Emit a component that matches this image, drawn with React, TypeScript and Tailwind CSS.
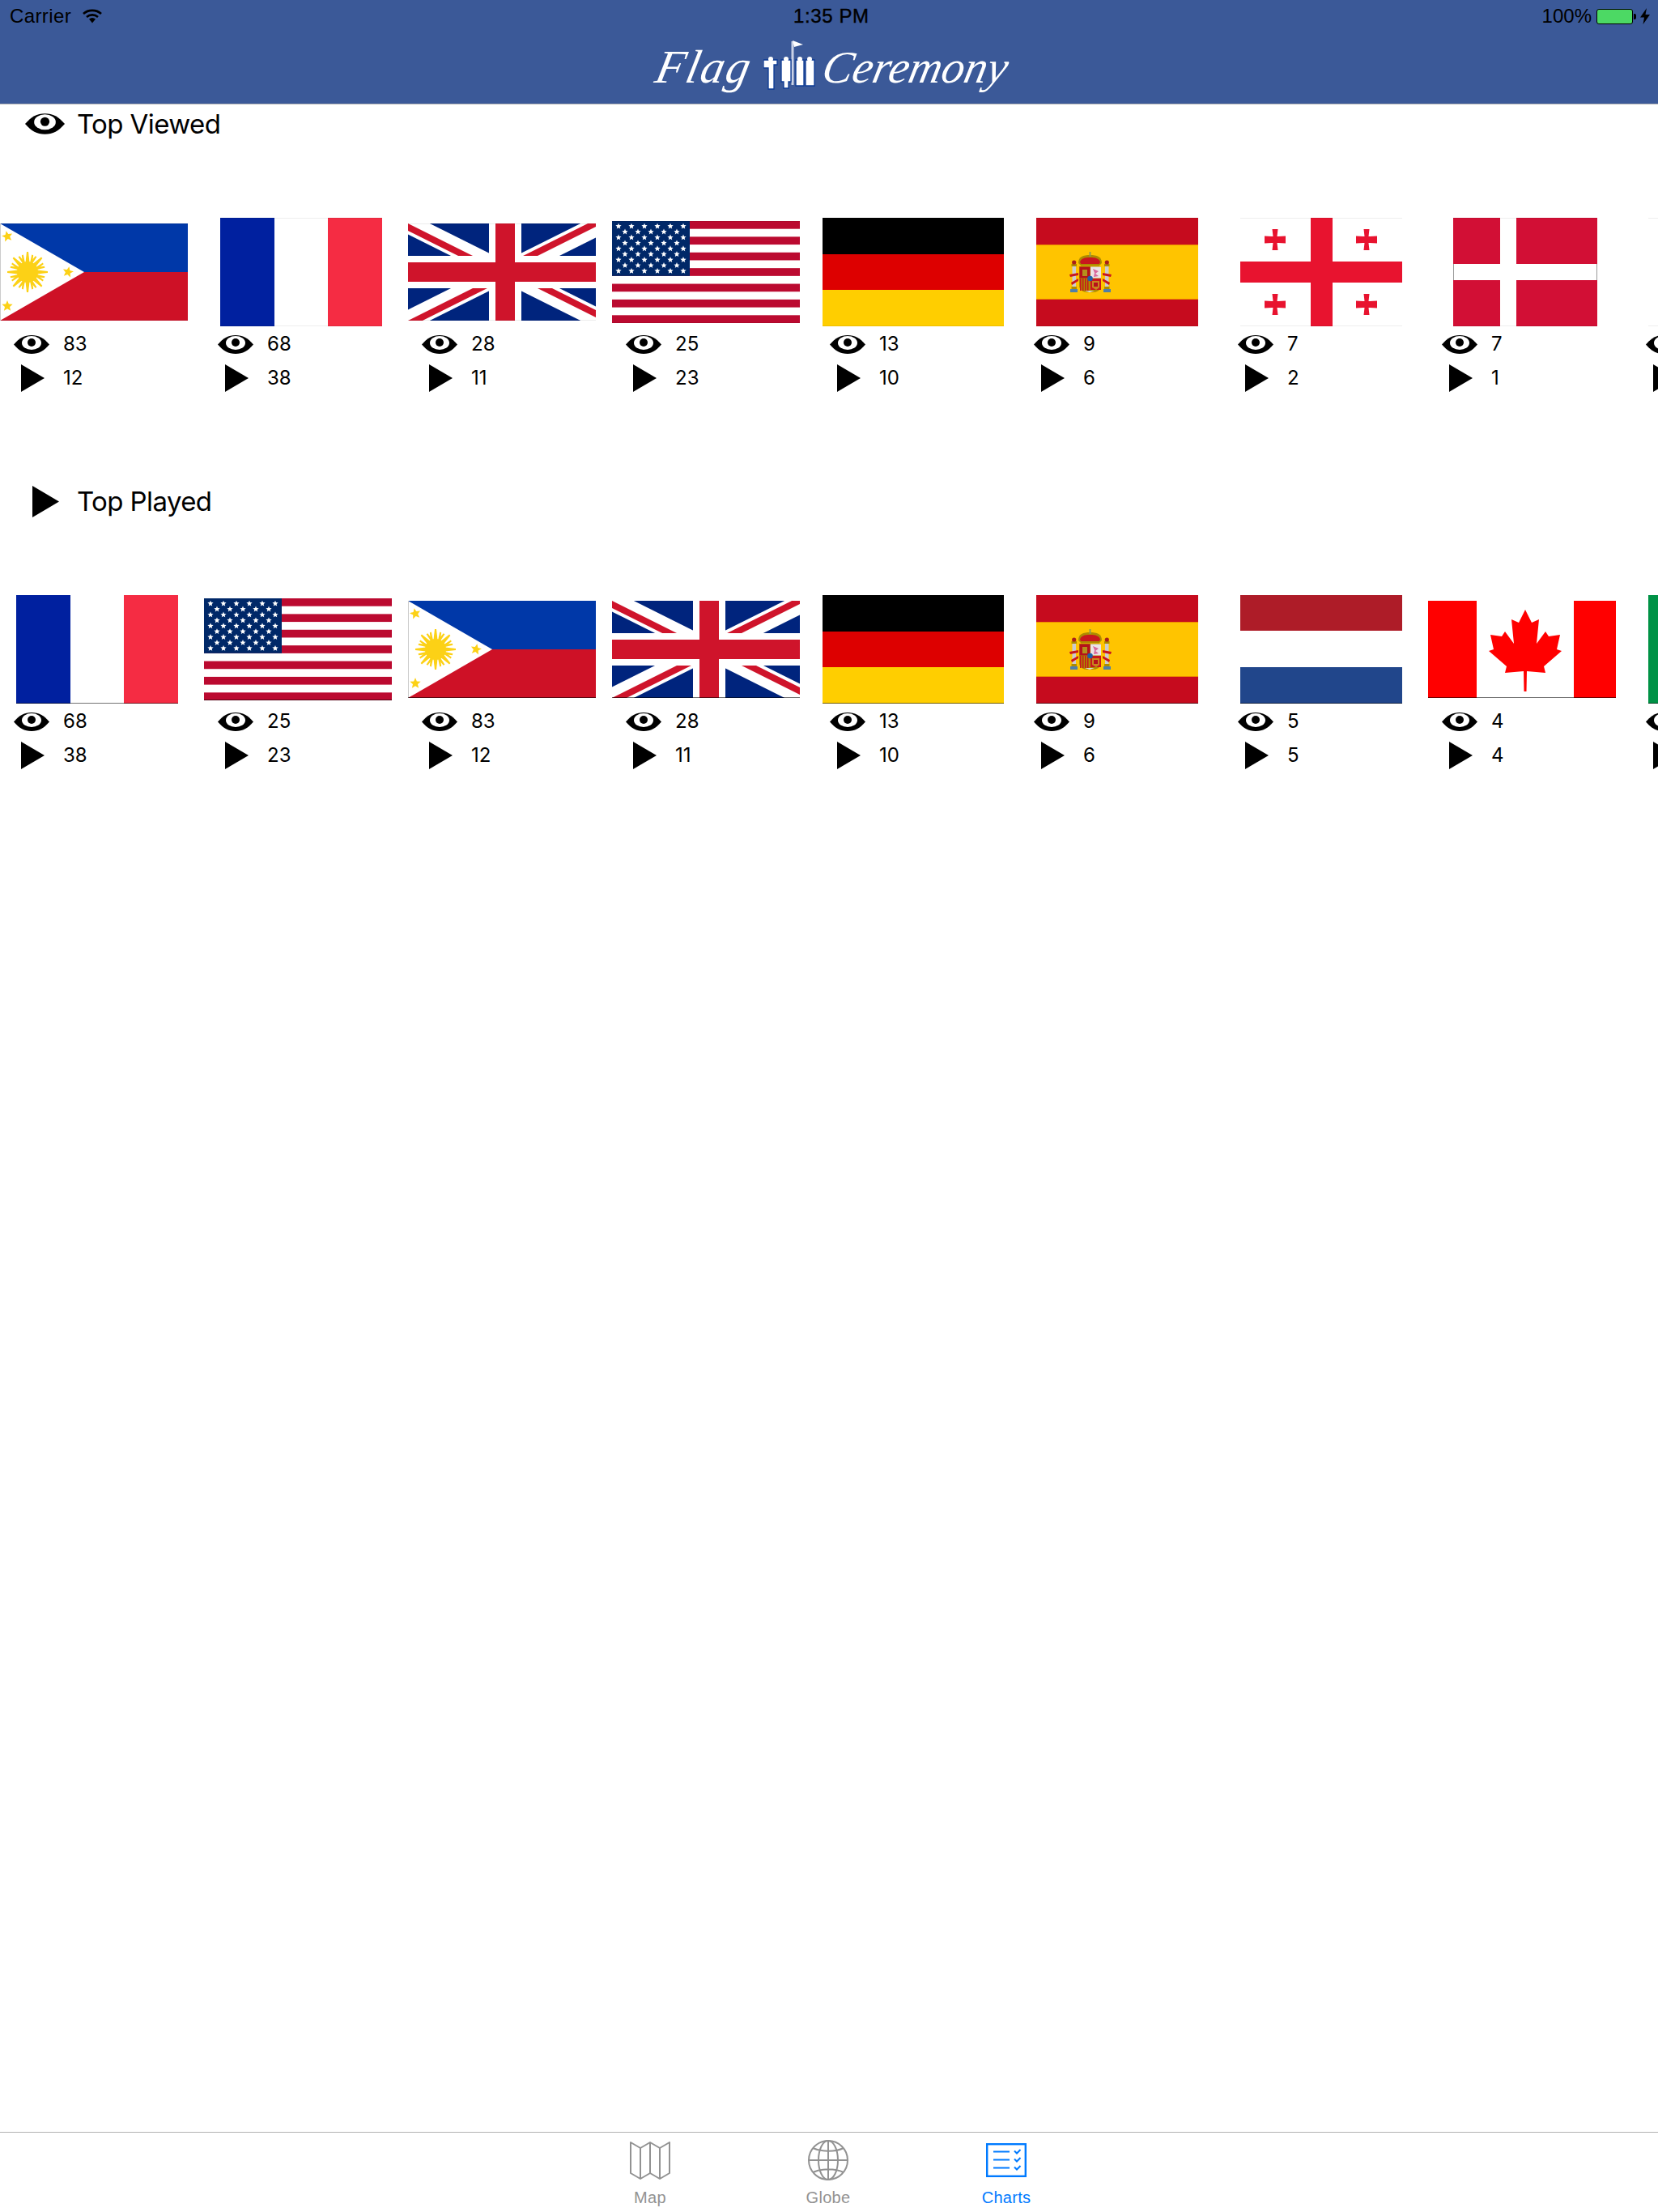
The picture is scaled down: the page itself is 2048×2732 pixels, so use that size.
import type { ReactNode } from "react";

const SANS = "font-['Liberation_Sans',Arial,sans-serif]";
const INTER = "font-['Inter',sans-serif]";

function EyeIcon({ className }: { className: string }) {
  return (
    <svg viewBox="0 0 44 23" className={className}>
      <path d="M0 11.500C7 3.500 13 0 22 0s15 3.500 22 11.500C37 19.500 31 23 22 23S7 19.500 0 11.500Z" fill="#000" />
      <ellipse cx="22" cy="9.500" rx="12" ry="8.500" fill="#fff" />
      <circle cx="22" cy="9" r="5" fill="#000" />
    </svg>
  );
}

function PlayIcon({ className }: { className: string }) {
  return (
    <svg viewBox="0 0 29 34" preserveAspectRatio="none" className={className}>
      <path d="M0 0L29 17L0 34Z" fill="#000" />
    </svg>
  );
}

function star(cx: number, cy: number, r: number) {
  const pts: string[] = [];
  for (let i = 0; i < 10; i++) {
    const rad = i % 2 === 0 ? r : r * 0.45;
    const a = (Math.PI / 5) * i - Math.PI / 2;
    pts.push(`${(cx + rad * Math.cos(a)).toFixed(2)},${(cy + rad * Math.sin(a)).toFixed(2)}`);
  }
  return pts.join(" ");
}

function Philippines() {
  const rays = [0, 45, 90, 135, 180, 225, 270, 315];
  return (
    <>
      <rect width="232" height="60" fill="#0038A8" />
      <rect y="60" width="232" height="60" fill="#CE1126" />
      <path d="M0 0L104 60L0 120Z" fill="#fff" />
      <rect width="1" height="120" fill="#ccc" />
      <g fill="#FCD116">
        <circle cx="34" cy="60" r="13" />
        {rays.map((r) => (
          <g key={r} transform={`rotate(${r} 34 60)`}>
            <path d="M31.500 48L33 35H35L36.500 48Z" />
            <path d="M31 48L32.500 38H34.500L34 48Z" transform="rotate(-15 34 60)" />
            <path d="M34 48L33.500 38H35.500L37 48Z" transform="rotate(15 34 60)" />
          </g>
        ))}
        <polygon points={star(9, 16, 7)} transform="rotate(-12 9 16)" />
        <polygon points={star(9, 102, 7)} />
        <polygon points={star(84, 60, 7)} transform="rotate(12 84 60)" />
      </g>
    </>
  );
}

function France() {
  return (
    <>
      <rect width="67" height="134" fill="#00209F" />
      <rect x="133" width="67" height="134" fill="#F52C43" />
    </>
  );
}

// source flag is 2:1 and its right end is cut off by the 232px box
function Britain() {
  return (
    <svg x="0" y="0" width="232" height="120" viewBox="0 0 58 30" preserveAspectRatio="none">
      <defs>
        <clipPath id="uk-t">
          <path d="M30 15H60V30ZV30H0ZH0V0ZV0H60Z" />
        </clipPath>
      </defs>
      <rect width="60" height="30" fill="#00247D" />
      <path d="M0 0L60 30M60 0L0 30" stroke="#fff" strokeWidth="6" />
      <path d="M0 0L60 30M60 0L0 30" stroke="#CF142B" strokeWidth="4" clipPath="url(#uk-t)" />
      <path d="M30 0V30M0 15H60" stroke="#fff" strokeWidth="10" />
      <path d="M30 0V30M0 15H60" stroke="#CF142B" strokeWidth="6" />
    </svg>
  );
}

function America() {
  const stripe = 126 / 13;
  const stars: string[] = [];
  for (let row = 0; row < 9; row++) {
    const count = row % 2 === 0 ? 6 : 5;
    for (let col = 0; col < count; col++) {
      stars.push(star(8 + col * 16 + (row % 2 === 0 ? 0 : 8), 6.5 + row * 6.9, 3.8));
    }
  }
  return (
    <>
      {Array.from({ length: 7 }, (_, i) => (
        <rect key={i} y={i * 2 * stripe} width="232" height={stripe} fill="#BB0A30" />
      ))}
      <rect width="96" height={stripe * 7} fill="#002868" />
      {stars.map((p) => (
        <polygon key={p} points={p} fill="#fff" />
      ))}
    </>
  );
}

function Germany() {
  return (
    <>
      <rect width="224" height="45" fill="#000" />
      <rect y="45" width="224" height="44" fill="#DD0000" />
      <rect y="89" width="224" height="45" fill="#FFCE00" />
    </>
  );
}

function Spain() {
  return (
    <>
      <rect width="200" height="134" fill="#C60B1E" />
      <rect y="33" width="200" height="68" fill="#FFC400" />
      <rect y="33" width="200" height="1" fill="#EE8A00" />
      <rect y="100" width="200" height="1" fill="#EE8A00" />
      {/* pillars */}
      <g>
        <rect x="44.5" y="60" width="4.5" height="27" fill="#ccc" />
        <rect x="85" y="60" width="4.5" height="27" fill="#ccc" />
        <rect x="43.5" y="57" width="6.5" height="3" fill="#AD8B00" />
        <rect x="84" y="57" width="6.5" height="3" fill="#AD8B00" />
        <rect x="43.5" y="85" width="6.5" height="3" fill="#AD8B00" />
        <rect x="84" y="85" width="6.5" height="3" fill="#AD8B00" />
        <rect x="42" y="88" width="9" height="4" fill="#4F7FA8" />
        <rect x="83" y="88" width="9" height="4" fill="#4F7FA8" />
        <circle cx="46.7" cy="55" r="2.6" fill="#A8201A" />
        <circle cx="87.3" cy="55" r="2.6" fill="#A8201A" />
        <path d="M41 70L52 68V71L42 73ZM43 80L52 75V78L44 83Z" fill="#C8171E" />
        <path d="M93 70L82 68V71L92 73ZM91 80L82 75V78L90 83Z" fill="#C8171E" />
      </g>
      {/* crown */}
      <path d="M52 56C52 48 58 46 66.500 46C75 46 81 48 81 56L78 59H55Z" fill="#AD8B00" />
      <path d="M54 55C55 50 60 49 66.500 49C73 49 78 50 79 55L77 58H56Z" fill="#C8171E" />
      <rect x="55" y="57" width="23" height="2.500" fill="#AD8B00" />
      <rect x="65.500" y="42" width="2" height="6" fill="#8C9A52" />
      {/* shield */}
      <path d="M53 60H80V84C80 89 75 92 70 92H63C58 92 53 89 53 84Z" fill="#AD8B00" />
      <rect x="53.500" y="60.500" width="13" height="14" fill="#B5121B" />
      <rect x="57" y="64" width="6" height="8" fill="#B58F1C" />
      <rect x="67" y="60.500" width="13" height="14" fill="#EBE3E6" />
      <path d="M70 63L77 66L73 69L77 72L71 73L72 68Z" fill="#D9679B" />
      <rect x="67" y="75" width="13" height="14" fill="#C8171E" />
      <path d="M69 78H78V86L74 89L69 86Z" fill="#C8861E" />
      <path d="M71 80H76V85H71Z" fill="#B5121B" />
      {[54, 57, 60, 63].map((x) => (
        <rect key={x} x={x} y="75" width="1.500" height="15" fill="#C8171E" />
      ))}
      <path d="M60 90H72L66 92Z" fill="#ddd" />
      <circle cx="66.500" cy="75" r="3.300" fill="#1F5FA8" />
    </>
  );
}

function BolnisiCross({ cx, cy }: { cx: number; cy: number }) {
  return (
    <path
      transform={`translate(${cx} ${cy})`}
      d="M-3.500 -13H3.500L2.500 -4L4 -4L13 -4.500V4.500L4 4L2.500 4L3.500 13H-3.500L-2.500 4L-4 4L-13 4.500V-4.500L-4 -4L-2.500 -4Z"
    />
  );
}

function Georgia() {
  return (
    <g fill="#E8132F">
      <rect x="87" width="27" height="134" />
      <rect y="54" width="200" height="26" />
      <BolnisiCross cx={43} cy={27} />
      <BolnisiCross cx={156} cy={27} />
      <BolnisiCross cx={43} cy={107} />
      <BolnisiCross cx={156} cy={107} />
    </g>
  );
}

function Denmark() {
  return (
    <>
      <rect width="178" height="134" fill="#D20F35" />
      <rect x="58" width="20" height="134" fill="#fff" />
      <rect y="57" width="178" height="20" fill="#fff" />
      <rect y="57" width="1" height="20" fill="#999" />
      <rect x="177" y="57" width="1" height="20" fill="#999" />
    </>
  );
}

function Netherlands() {
  return (
    <>
      <rect width="200" height="44" fill="#AE1C28" />
      <rect y="89" width="200" height="45" fill="#21468B" />
    </>
  );
}

function Canada() {
  return (
    <>
      <rect width="60" height="120" fill="#FF0000" />
      <rect x="180" width="52" height="120" fill="#FF0000" />
      <path
        d="M120 11L128 27L137 23L134 53L145 38L149 44L163 42L159 60L165 62L143 81L145 89L122 87L121.500 112H118.500L118 87L95 89L97 81L75 62L81 60L77 42L91 44L95 38L106 53L103 23L112 27Z"
        fill="#FF0000"
      />
    </>
  );
}

function Italy() {
  return (
    <>
      <rect width="67" height="134" fill="#009246" />
      <rect x="133" width="67" height="134" fill="#CE2B37" />
    </>
  );
}

type FlagDef = { w: number; h: number; art: ReactNode };

const FLAGS: Record<string, FlagDef> = {
  ph: { w: 232, h: 120, art: <Philippines /> },
  fr: { w: 200, h: 134, art: <France /> },
  gb: { w: 232, h: 120, art: <Britain /> },
  us: { w: 232, h: 126, art: <America /> },
  de: { w: 224, h: 134, art: <Germany /> },
  es: { w: 200, h: 134, art: <Spain /> },
  ge: { w: 200, h: 134, art: <Georgia /> },
  dk: { w: 178, h: 134, art: <Denmark /> },
  nl: { w: 200, h: 134, art: <Netherlands /> },
  ca: { w: 232, h: 120, art: <Canada /> },
  it: { w: 200, h: 134, art: <Italy /> },
  blank: { w: 200, h: 134, art: null },
};

function Flag({ code, line }: { code: string; line: boolean }) {
  const f = FLAGS[code];
  return (
    <svg width={f.w} height={f.h} viewBox={`0 0 ${f.w} ${f.h}`} className="block">
      {f.art}
      {line ? (
        <rect y={f.h - 1} width={f.w} height="1" fill="#000" opacity="0.55" />
      ) : (
        <>
          <rect width={f.w} height="1" fill="#000" opacity="0.07" />
          <rect y={f.h - 1} width={f.w} height="1" fill="#000" opacity="0.07" />
        </>
      )}
    </svg>
  );
}

function FlagCell({ code, views, plays, line }: { code: string; views?: number; plays?: number; line: boolean }) {
  const f = FLAGS[code];
  return (
    <div className="w-[252px] shrink-0">
      {/* 232 wide flags sit flush left, the narrower ones centre on 120 */}
      <div className={f.w === 232 ? "flex h-[134px] w-[232px] items-center" : "flex h-[134px] w-[240px] items-center justify-center"}>
        <Flag code={code} line={line} />
      </div>
      <div className="mt-[11px] flex h-[23px] items-center pl-[17px]">
        <EyeIcon className="h-[23px] w-[44px] shrink-0" />
        <span className={`ml-[17px] -mt-[2px] text-[24px] leading-none text-black ${INTER}`}>{views}</span>
      </div>
      <div className="mt-[13px] flex h-[34px] items-center pl-[26px]">
        <PlayIcon className="h-[34px] w-[29px] shrink-0" />
        <span className={`ml-[23px] text-[24px] leading-none text-black ${INTER}`}>{plays}</span>
      </div>
    </div>
  );
}

const TOP_VIEWED: [string, number?, number?][] = [
  ["ph", 83, 12],
  ["fr", 68, 38],
  ["gb", 28, 11],
  ["us", 25, 23],
  ["de", 13, 10],
  ["es", 9, 6],
  ["ge", 7, 2],
  ["dk", 7, 1],
  ["blank"],
];

const TOP_PLAYED: [string, number?, number?][] = [
  ["fr", 68, 38],
  ["us", 25, 23],
  ["ph", 83, 12],
  ["gb", 28, 11],
  ["de", 13, 10],
  ["es", 9, 6],
  ["nl", 5, 5],
  ["ca", 4, 4],
  ["it"],
];

function Section({ title, icon, rows, line }: { title: string; icon: ReactNode; rows: [string, number?, number?][]; line: boolean }) {
  return (
    <section className="h-[466px]">
      <div className="flex h-[48px] items-center">
        <div className="flex w-[95px] shrink-0 items-center">{icon}</div>
        <span className={`text-[33px] leading-none tracking-[-0.6px] text-black ${INTER}`}>{title}</span>
      </div>
      <div className="mt-[92px] flex overflow-hidden">
        {rows.map(([code, v, p]) => (
          <FlagCell key={code} code={code} views={v} plays={p} line={line} />
        ))}
      </div>
    </section>
  );
}

function StatusBar() {
  return (
    <div className="relative flex h-[40px] items-center justify-between pl-[12px] pr-[10px] text-[24px] leading-none text-black">
      <div className="flex items-center gap-[14px]">
        <span className="tracking-[0.4px]">Carrier</span>
        <svg width="24" height="18" viewBox="0 0 24 18">
          <path d="M1 6C7 0.500 17 0.500 23 6" fill="none" stroke="#000" strokeWidth="2.600" />
          <path d="M5 10C9 6.500 15 6.500 19 10" fill="none" stroke="#000" strokeWidth="2.600" />
          <path d="M8 12.500C10.500 10.500 13.500 10.500 16 12.500L12 17.500Z" fill="#000" />
        </svg>
      </div>
      <span className="absolute left-[980px] tracking-[0.6px] [-webkit-text-stroke:0.4px_black]">1:35 PM</span>
      <div className="flex items-center">
        <span>100%</span>
        <div className="ml-[6px] flex h-[19px] w-[45px] rounded-[3px] border-[1.5px] border-black bg-[#4CD964]" />
        <div className="ml-[1px] h-[7px] w-[3px] rounded-r-[2px] bg-black" />
        <svg width="12" height="20" viewBox="0 0 12 20" className="ml-[5px]">
          <path d="M8 0L0 11.500H5L3.500 20L12 8H6.500Z" fill="#000" />
        </svg>
      </div>
    </div>
  );
}

// little band of players with the flag, sits between the two words
function LogoMark() {
  const bodies = [
    "M0 25H17V31H13V61H6V35H0Z",
    "M22 25H34V52H31V60H25V52H22Z",
    "M40 25H50V57H40Z",
    "M52 25H63V57H52Z",
  ];
  return (
    <svg width="64" height="62" viewBox="0 0 64 62" className="mx-[10px] shrink-0 -mt-[5px]">
      <rect x="34.500" y="2" width="3" height="54" fill="#C9D2E6" />
      {bodies.map((d) => (
        <path key={d} d={d} fill="#fff" stroke="#0B3A94" strokeWidth="1.300" />
      ))}
      <circle cx="9" cy="24" r="3" fill="#fff" />
      <circle cx="28" cy="24" r="3" fill="#fff" />
      <circle cx="45" cy="24" r="3" fill="#fff" />
      <circle cx="57" cy="24" r="3" fill="#fff" />
      <path d="M36 1L49 6L38 9Z" fill="#fff" />
    </svg>
  );
}

function NavBar() {
  return (
    <header className="h-[129px] border-b border-[#b2b2b2] bg-[#3B5998]">
      <StatusBar />
      <div className="flex h-[88px] items-start pl-[811px] pt-[14px]">
        <span className="-skew-x-12 w-[122px] font-['Liberation_Serif',serif] text-[58px] italic leading-[58px] tracking-[2px] text-white">Flag</span>
        <LogoMark />
        <span className="-skew-x-12 font-['Liberation_Serif',serif] text-[56px] italic leading-[58px] text-white">Ceremony</span>
      </div>
    </header>
  );
}

function TabItem({ label, active, children }: { label: string; active?: boolean; children: ReactNode }) {
  return (
    <div className="flex w-[220px] flex-col items-center">
      <div className="flex h-[60px] items-center">{children}</div>
      <span className={active ? "mt-[6px] text-[20px] leading-[20px] tracking-[0.3px] text-[#007AFF]" : "mt-[6px] text-[20px] leading-[20px] tracking-[0.3px] text-[#929292]"}>{label}</span>
    </div>
  );
}

function TabBar() {
  return (
    <footer className="flex h-[99px] justify-center border-t border-[#b2b2b2] pt-[4px] pr-[2px]">
      <TabItem label="Map">
        <svg width="50" height="47" viewBox="0 0 50 47" fill="none" stroke="#929292" strokeWidth="2">
          <path d="M1 1L13 8L25 1L37 8L49 1V39L37 46L25 39L13 46L1 39Z" strokeLinejoin="round" />
          <path d="M13 8V46M25 1V39M37 8V46" />
        </svg>
      </TabItem>
      <TabItem label="Globe">
        <svg width="50" height="50" viewBox="0 0 50 50" fill="none" stroke="#929292" strokeWidth="2">
          <circle cx="25" cy="25" r="24" />
          <ellipse cx="25" cy="25" rx="12" ry="24" />
          <path d="M25 1V49M1 25H49M6 10C16 15 34 15 44 10M6 40C16 35 34 35 44 40" />
        </svg>
      </TabItem>
      <TabItem label="Charts" active>
        <svg width="50" height="42" viewBox="0 0 50 42" fill="none" stroke="#007AFF">
          <rect x="1.200" y="1.200" width="47.600" height="39.600" strokeWidth="2.400" />
          <path d="M9 10.500H29M9 20.500H29M9 30.500H29" strokeWidth="2" />
          <path d="M35 9.500L38 12.500L42.500 8M35 19.500L38 22.500L42.500 18M35 29.500L38 32.500L42.500 28" strokeWidth="2" />
        </svg>
      </TabItem>
    </footer>
  );
}

export default function App() {
  return (
    <div className={`flex h-[2732px] w-[2048px] flex-col overflow-hidden bg-white ${SANS}`}>
      <NavBar />
      <main className="flex-1">
        <Section title="Top Viewed" rows={TOP_VIEWED} line={false} icon={<EyeIcon className="ml-[31px] h-[26px] w-[49px]" />} />
        <Section title="Top Played" rows={TOP_PLAYED} line={true} icon={<PlayIcon className="ml-[40px] h-[39px] w-[33px]" />} />
      </main>
      <TabBar />
    </div>
  );
}
